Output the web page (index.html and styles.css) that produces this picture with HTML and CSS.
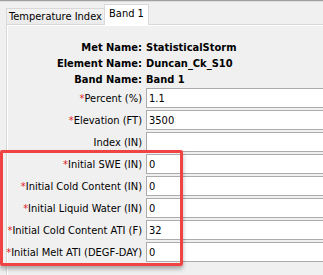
FILE: index.html
```html
<!DOCTYPE html>
<html>
<head>
<meta charset="utf-8">
<link rel="stylesheet" href="styles.css">
</head>
<body>
<div class="window">
  <div class="tabs">
    <div class="tab tab-temp">Temperature Index</div>
    <div class="tab tab-band selected">Band 1</div>
  </div>
  <div class="panel">
    <div class="info">
      <div class="label bold">Met Name:</div><div class="value bold">StatisticalStorm</div>
      <div class="label bold">Element Name:</div><div class="value bold">Duncan_Ck_S10</div>
      <div class="label bold">Band Name:</div><div class="value bold">Band 1</div>
    </div>
    <div class="fields">
      <div class="label"><span class="req">*</span>Percent (%)</div><div class="field">1.1</div>
      <div class="label"><span class="req">*</span>Elevation (FT)</div><div class="field">3500</div>
      <div class="label">Index (IN)</div><div class="field"></div>
      <div class="label"><span class="req">*</span>Initial SWE (IN)</div><div class="field">0</div>
      <div class="label"><span class="req">*</span>Initial Cold Content (IN)</div><div class="field">0</div>
      <div class="label"><span class="req">*</span>Initial Liquid Water (IN)</div><div class="field">0</div>
      <div class="label"><span class="req">*</span>Initial Cold Content ATI (F)</div><div class="field">32</div>
      <div class="label"><span class="req">*</span>Initial Melt ATI (DEGF-DAY)</div><div class="field">0</div>
    </div>
  </div>
  <div class="highlight"></div>
</div>
</body>
</html>
```

FILE: styles.css
```css
html, body {
  margin: 0;
  padding: 0;
}
body {
  background: #f0f0f0;
  width: 323px;
  height: 275px;
  overflow: hidden;
  font-family: "DejaVu Sans Condensed", "DejaVu Sans", "Liberation Sans", sans-serif;
  font-stretch: condensed;
  font-size: 11px;
  color: #000;
}
.window {
  position: relative;
  width: 323px;
  height: 275px;
  overflow: hidden;
  border-top: 1px solid #a0a0a0;
  box-sizing: border-box;
}
.tabs {
  display: flex;
  align-items: flex-end;
  height: 23px;
  padding-left: 6px;
  box-shadow: inset 0 1px #dcdcdc;
}
.tab {
  box-sizing: border-box;
  border: 1px solid #d9d9d9;
  border-bottom: none;
  background: #f0f0f0;
  display: flex;
  align-items: center;
  justify-content: center;
  white-space: nowrap;
}
.tab-temp {
  width: 98px;
  height: 16px;
  border-right: none;
  background: linear-gradient(#f2f2f2, #ebebeb);
}
.tab-band {
  width: 45px;
  height: 21px;
  margin-bottom: -1px;
  position: relative;
  z-index: 1;
  background: #ffffff;
  padding-bottom: 3px;
}
.panel {
  margin-left: 6px;
  border-top: 1px solid #d9d9d9;
  border-left: 1px solid #d9d9d9;
  box-shadow: inset 0 1px #ffffff, inset 1px 0 #ffffff;
  height: 251px;
  padding-top: 14px;
  box-sizing: border-box;
}
.info, .fields {
  display: grid;
  grid-template-columns: 135px 1fr;
  column-gap: 4px;
}
.info {
  grid-auto-rows: 16px;
  margin-bottom: 1px;
}
.fields {
  grid-auto-rows: 20px;
  row-gap: 2px;
}
.label {
  text-align: right;
  white-space: nowrap;
  display: flex;
  align-items: center;
  justify-content: flex-end;
}
.value {
  display: flex;
  align-items: center;
  white-space: nowrap;
}
.bold {
  font-weight: bold;
}
.req {
  color: #e0201c;
}
.field {
  background: #ffffff;
  border: 1px solid #ababab;
  border-right: none;
  box-sizing: border-box;
  padding-left: 2px;
  display: flex;
  align-items: center;
}
.highlight {
  position: absolute;
  left: 0;
  top: 149px;
  width: 183px;
  height: 116px;
  box-sizing: border-box;
  border: 3px solid #f04444;
  border-radius: 2px;
  box-shadow: 0 3px 4px rgba(0, 0, 0, 0.3);
}
```
